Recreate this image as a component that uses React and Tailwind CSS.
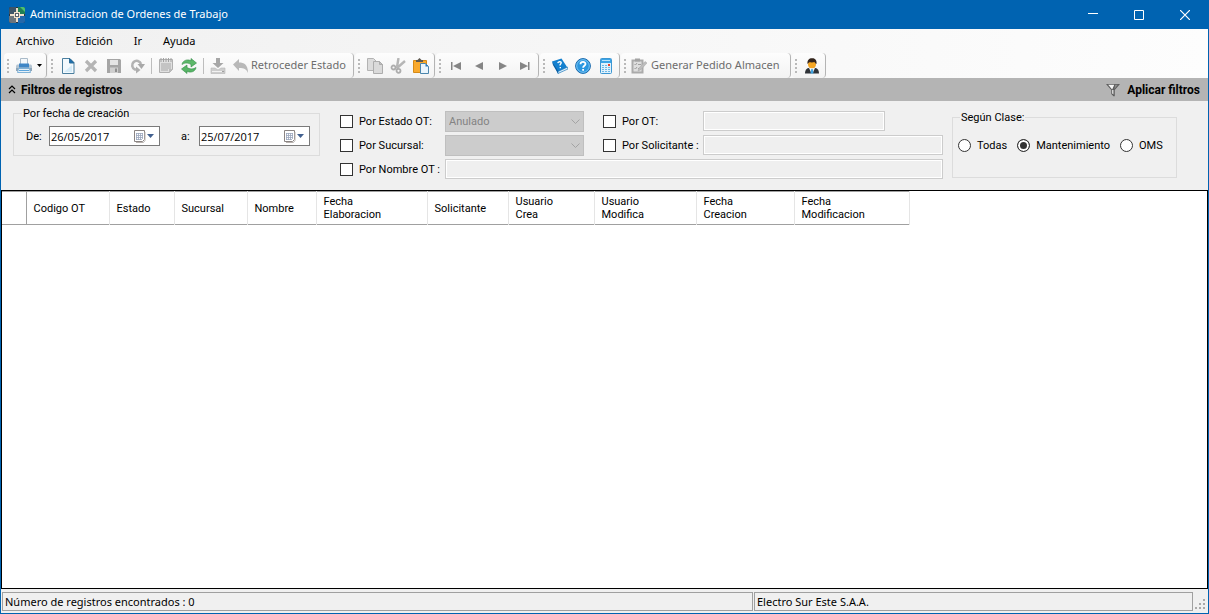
import React, { useState } from "react";

const menus = ["Archivo", "Edición", "Ir", "Ayuda"];

const columns = [
  { label: "", width: 24 },
  { label: "Codigo OT", width: 83 },
  { label: "Estado", width: 65 },
  { label: "Sucursal", width: 73 },
  { label: "Nombre", width: 69 },
  { label: "Fecha Elaboracion", width: 111 },
  { label: "Solicitante", width: 81 },
  { label: "Usuario Crea", width: 86 },
  { label: "Usuario Modifica", width: 102 },
  { label: "Fecha Creacion", width: 98 },
  { label: "Fecha Modificacion", width: 115 },
];

const Icon = ({ children, size = 16 }) => (
  <svg width={size} height={size} viewBox="0 0 16 16" fill="none" className="shrink-0">
    {children}
  </svg>
);

const AppIcon = () => (
  <Icon>
    <rect width="16" height="16" rx="2" fill="#2a3440" />
    <path d="M2 0h5v7H0V2a2 2 0 0 1 2-2z" fill="#3d5468" />
    <path d="M9 0h5a2 2 0 0 1 2 2v5H9z" fill="#1f7f55" />
    <path d="M11 0h3a2 2 0 0 1 2 2v3z" fill="#4fc06d" />
    <path d="M0 9h7v7H2a2 2 0 0 1-2-2z" fill="#6b747c" />
    <path d="M9 9h7v5a2 2 0 0 1-2 2H9z" fill="#2468ab" />
    <path d="M7 1h2v4h2v2h4v2h-4v2H9v4H7v-4H5V9H1V7h4V5h2z" fill="#efe0cc" />
    <path d="M6 6h4v4H6z" fill="#59616b" />
    <path d="M7 7h2v2H7z" fill="#fff" />
  </Icon>
);

const PrintIcon = () => (
  <Icon>
    <path d="M4.500.5h7V7h-7z" fill="#f4f8fb" stroke="#a9bac8" />
    <path d="M1 6.500h14l1 1V13H0V7.500z" fill="#b5c5d2" />
    <path d="M3 5.500h10v4H3z" fill="#3f86c6" />
    <path d="M0 10h16v3H0z" fill="#8ea5b8" />
    <path d="M2.500 10.500h11l1 4h-13z" fill="#e9f1f7" stroke="#7fb1d6" />
    <path d="M3 12.500h10" stroke="#5ca5dc" />
  </Icon>
);

const NewIcon = () => (
  <Icon>
    <path d="M2.500.5h7.500l4 4v11H2.500z" fill="#f2f9fd" stroke="#4b7f9f" />
    <path d="M9.500.5v4.500h4.500z" fill="#1c6fb0" stroke="#2d6e99" />
    <path d="M4 14l8-7v7z" fill="#d4ebf8" />
  </Icon>
);

const DeleteIcon = () => (
  <Icon>
    <path d="M3 3l10 10M13 3L3 13" stroke="#b4b4b4" strokeWidth="3.200" />
  </Icon>
);

const SaveIcon = () => (
  <Icon>
    <path d="M1 1h13l1 1v13H1z" fill="#a5a5a5" />
    <path d="M4 2h8v5H4z" fill="#e4e4e4" />
    <path d="M4 9.500h8V15H4z" fill="#cfcfcf" />
    <path d="M9 10.500h2V14H9z" fill="#8f8f8f" />
  </Icon>
);

const UndoIcon = () => (
  <Icon>
    <path d="M8 11.500H6A4.500 4.500 0 1 1 12 6" stroke="#b2b2b2" strokeWidth="2.600" />
    <path d="M8.500 6H16l-3.500 5z" fill="#a8a8a8" />
    <path d="M7 8.500v7l4.500-3.500z" fill="#aeaeae" />
  </Icon>
);

const SheetIcon = () => (
  <Icon>
    <path d="M1.500 1.500h13v10l-3 3h-10z" fill="#e0e0e0" stroke="#b0b0b0" />
    <path d="M3 0v4M5.500 0v4M8 0v4M10.500 0v4M13 0v4" stroke="#a2a2a2" />
    <path d="M3 6h10M3 8h10M3 10h10M3 12h7" stroke="#a8a8a8" />
    <path d="M11 15v-4h4z" fill="#bcbcbc" />
  </Icon>
);

const RefreshIcon = () => (
  <Icon>
    <path d="M1 6.500C1.500 3 5 1.500 8 2l2 .8V.5L15.500 5 10 9V6.500C7.500 4.800 4 4.500 1 6.500z" fill="#5cb869" stroke="#2f8a43" strokeWidth=".6" />
    <path d="M15 9.500c-.5 3.500-4 5-7 4.500l-2-.8v2.300L.5 11 6 7v2.500c2.500 1.700 6 2 9 0z" fill="#57b566" stroke="#2f8a43" strokeWidth=".6" />
  </Icon>
);

const ImportIcon = () => (
  <Icon>
    <path d="M6 0h4v5h3.500L8 10 2.500 5H6z" fill="#a6a6a6" />
    <path d="M1 10h4l3 2 3-2h4v5.500H1z" fill="#cdcdcd" stroke="#b6b6b6" strokeWidth=".6" />
    <path d="M2 13.500h12" stroke="#f2f2f2" />
    <path d="M12 13h2v1h-2z" fill="#a0a0a0" />
  </Icon>
);

const BackIcon = () => (
  <Icon>
    <path d="M0 6.500L6 1v3.500c5 0 9 2 9 10.500-1.500-4-4-5-9-5V13z" fill="#b8b8b8" />
  </Icon>
);

const CopyIcon = () => (
  <Icon>
    <path d="M.5.5h6l3 3v9h-9z" fill="#dcdcdc" stroke="#b3b3b3" />
    <path d="M6.500 3.500h6l3 3v9h-9z" fill="#dadada" stroke="#adadad" />
    <path d="M12.500 3.500v3h3z" fill="#c0c0c0" stroke="#adadad" />
  </Icon>
);

const CutIcon = () => (
  <Icon>
    <path d="M8.500 0L7 9M15 3L6.500 10.500" stroke="#b6b6b6" strokeWidth="2.400" />
    <circle cx="3.500" cy="9.500" r="2" stroke="#adadad" strokeWidth="1.800" />
    <circle cx="8.500" cy="12.800" r="2" stroke="#adadad" strokeWidth="1.800" />
  </Icon>
);

const PasteIcon = () => (
  <Icon>
    <path d="M.5 2.500h13v12H.5z" fill="#f9a92c" stroke="#d58a17" />
    <path d="M3 2h1.500L6.500 0 8.500 2H10v2H3z" fill="#5f5a50" />
    <path d="M7.500 5.500h5l3 3v7h-8z" fill="#eaf5fc" stroke="#4b86ad" />
    <path d="M12.500 5.500v3h3z" fill="#2a7ab8" />
  </Icon>
);

const FirstIcon = () => (
  <Icon>
    <path d="M3 4h1.500v8H3zM13 4v8L5 8z" fill="#858585" />
  </Icon>
);
const PrevIcon = () => (
  <Icon>
    <path d="M12 4v8L4 8z" fill="#858585" />
  </Icon>
);
const NextIcon = () => (
  <Icon>
    <path d="M5 4v8l8-4z" fill="#858585" />
  </Icon>
);
const LastIcon = () => (
  <Icon>
    <path d="M3 4v8l8-4zM11 4h1.500v8H11z" fill="#858585" />
  </Icon>
);

const BookIcon = () => (
  <Icon>
    <path d="M0 3.500L9.500.5 16 10.500 6 15.500z" fill="#1380cf" />
    <path d="M0 3.500L1 7l5 8.500.5-2z" fill="#0b5c9f" />
    <path d="M6 13.500l9.500-4.500.5 2L6 15.500z" fill="#d9eefb" stroke="#1471b5" strokeWidth=".6" />
    <path d="M5.800 5.200C6 3.500 9 3 9.200 4.800c0 1.200-1.400 1.200-1.200 2.700M8.300 9v1.300" stroke="#fff" strokeWidth="1.400" />
  </Icon>
);

const HelpIcon = () => (
  <Icon>
    <circle cx="8" cy="8" r="7.400" fill="#2b97e0" stroke="#1a69ac" />
    <circle cx="8" cy="8" r="6.300" stroke="#8fd0f7" strokeWidth=".8" />
    <path d="M5.500 6.200C5.600 3.200 10.500 3.300 10.500 6c0 1.800-2.400 1.800-2.400 3.700M8.100 11v1.800" stroke="#fff" strokeWidth="1.800" />
  </Icon>
);

const CalcIcon = () => (
  <Icon>
    <rect x="2.500" y=".5" width="11" height="15" rx="1" fill="#dff1fc" stroke="#3c97d3" />
    <path d="M3 1h10v4H3z" fill="#3ba4e6" />
    <path d="M4 2.500h8" stroke="#b9e2fa" />
    <path d="M4 7.500h8M4 9.500h8M4 11.500h8M4 13.500h8" stroke="#6bb8e8" strokeDasharray="2 1" />
    <path d="M10 6h2v2h-2z" fill="#e8402c" />
  </Icon>
);

const OrderIcon = () => (
  <Icon>
    <path d="M1.500 2.500h10v12h-10z" fill="#dedede" stroke="#ababab" strokeWidth="2" />
    <path d="M4 .5h5v3H4z" fill="#a3a3a3" />
    <path d="M3.500 6l1 1 1.500-2M7 6.500h3M3.500 10l1 1 1.500-2M7 10.500h2" stroke="#a0a0a0" />
    <path d="M7 13l1-3 6-6.500L16 5l-6 6.500z" fill="#bdbdbd" stroke="#a5a5a5" strokeWidth=".5" />
  </Icon>
);

const UserIcon = () => (
  <Icon>
    <path d="M1 15.500c0-4 2-6 7-6s7 2 7 6z" fill="#2f3338" />
    <path d="M5 10h6l-2.500 5.500h-1z" fill="#eef6fb" />
    <path d="M7.300 11h1.400l.8 4.500h-3z" fill="#3fa2e0" />
    <circle cx="8" cy="6.200" r="4" fill="#f5a623" />
    <path d="M3.500 6C3 2 5.500 0 8.500.3 11.500.3 13 3 12.500 6 11 5.500 10.500 4 10.500 4 8 5 5.500 4 5 4.500c-.5.500-1 1-1.500 1.500z" fill="#33251c" />
  </Icon>
);

const FilterIcon = () => (
  <Icon size={14}>
    <path d="M0 1h16l-6 7v7H8.500L6 12.500V8z" fill="#5c5c5c" />
    <path d="M2.500 2h7L7 7.500z" fill="#f4f4f4" />
    <path d="M7 8h1.500v5L7 12z" fill="#e6e6e6" />
    <path d="M10.500 2h3L9.500 7z" fill="#8c8c8c" />
  </Icon>
);

const CalendarIcon = () => (
  <svg width="21" height="13" viewBox="0 0 21 13" fill="none">
    <path d="M.5.5h10v9l-2 2h-8z" fill="#fff" stroke="#8a8482" />
    <path d="M11 2v8.500L9.500 12.500H2" stroke="#b9b3b0" />
    <path d="M2 3.500h7M2 5.500h7M2 7.500h7M2 9.500h6M2.500 3v7M4.500 3v7M6.500 3v7M8.500 3v6" stroke="#9aa6bc" strokeWidth=".8" />
    <path d="M13 4h7l-3.500 4z" fill="#42608f" />
  </svg>
);

const Strip = ({ children }) => (
  <div className="flex items-center h-[25px] pr-0.5 rounded-sm border-r border-[#b4b4b4] bg-linear-to-b from-[#fdfdfd] to-[#f3f3f3]">
    <div className="w-2 shrink-0 flex justify-center">
      <svg width="2" height="14" viewBox="0 0 2 14">
        <path d="M0 0h2v2H0zM0 4h2v2H0zM0 8h2v2H0zM0 12h2v2H0z" fill="#b9b9b9" />
      </svg>
    </div>
    {children}
  </div>
);

const ToolButton = ({ label, children }) => (
  <button type="button" aria-label={label} className="w-[23px] h-[23px] shrink-0 flex items-center justify-center">
    {children}
  </button>
);

const Separator = () => (
  <div className="w-1.5 flex justify-center">
    <div className="w-px h-4 bg-[#bdbdbd]" />
  </div>
);

const CheckField = ({ id, label }) => (
  <div className="flex items-center gap-1.5 whitespace-nowrap">
    <input
      id={id}
      type="checkbox"
      className="appearance-none size-[13px] shrink-0 border border-[#333] bg-white checked:bg-[#333] checked:shadow-[inset_0_0_0_2px_white]"
    />
    <label htmlFor={id}>{label}</label>
  </div>
);

const SelectField = ({ label, value }) => (
  <div className="relative h-[21px]">
    <select
      disabled
      aria-label={label}
      className="appearance-none w-full h-full pl-[3px] border border-[#bfbfbf] bg-[#cccccc] text-[#838383] opacity-100"
    >
      <option>{value}</option>
    </select>
    <svg width="9" height="6" viewBox="0 0 9 6" fill="none" className="absolute right-1 top-2 pointer-events-none">
      <path d="M.5.5l4 4 4-4" stroke="#a3a3a3" />
    </svg>
  </div>
);

const DateField = ({ id, label, labelClass, value, onChange }) => (
  <div className="flex items-center">
    <label htmlFor={id} className={labelClass}>
      {label}
    </label>
    <div className="flex items-center w-[111px] h-5 pr-1 border border-[#7a7a7a] bg-white">
      <input
        id={id}
        type="text"
        value={value}
        onChange={(e) => onChange(e.target.value)}
        className="flex-1 min-w-0 pl-px font-['Open_Sans',sans-serif] text-[11px] outline-none"
      />
      <button type="button" aria-label="Abrir calendario">
        <CalendarIcon />
      </button>
    </div>
  </div>
);

const disabledInput = "h-5 border border-[#cccccc] bg-[#efefef] shadow-[inset_0_0_0_1px_white]";

export default function App() {
  const [from, setFrom] = useState("26/05/2017");
  const [to, setTo] = useState("25/07/2017");
  const [clase, setClase] = useState("Mantenimiento");

  return (
    <div className="min-h-screen flex flex-col border border-t-0 border-[#0063b1] bg-[#f0f0f0] text-black font-['Noto_Sans','Open_Sans',sans-serif] text-[11px]">
      <header className="flex items-center h-[29px] pl-2 bg-[#0063b1] text-white">
        <AppIcon />
        <h1 className="pl-[5px] flex-1">Administracion de Ordenes de Trabajo</h1>
        <button type="button" aria-label="Minimizar" className="w-[46px] h-full flex items-center justify-center">
          <svg width="10" height="10" viewBox="0 0 10 10" stroke="#fff">
            <path d="M0 3.500h10" />
          </svg>
        </button>
        <button type="button" aria-label="Maximizar" className="w-[46px] h-full flex items-center justify-center">
          <svg width="10" height="10" viewBox="0 0 10 10" fill="none" stroke="#fff">
            <path d="M.5.5h9v9h-9z" />
          </svg>
        </button>
        <button type="button" aria-label="Cerrar" className="w-[46px] h-full flex items-center justify-center">
          <svg width="10" height="10" viewBox="0 0 10 10" stroke="#fff" strokeWidth="1.200">
            <path d="M0 0l10 10M10 0L0 10" />
          </svg>
        </button>
      </header>

      <div className="bg-linear-to-r from-[#f0f0f0] to-[#fdfdfd]">
        <nav className="flex items-center gap-[21px] h-6 pl-[15px]">
          {menus.map((m) => (
            <button key={m} type="button">
              {m}
            </button>
          ))}
        </nav>
        <div className="flex items-center gap-px pl-[3px] text-[#6d6d6d] overflow-hidden">
          <Strip>
            <ToolButton label="Imprimir"><PrintIcon /></ToolButton>
            <button type="button" aria-label="Opciones de impresión" className="w-[9px] flex justify-center">
              <svg width="5" height="3" viewBox="0 0 5 3">
                <path d="M0 0h5L2.500 3z" fill="#000" />
              </svg>
            </button>
          </Strip>
          <Strip>
            <ToolButton label="Nuevo"><NewIcon /></ToolButton>
            <ToolButton label="Eliminar"><DeleteIcon /></ToolButton>
            <ToolButton label="Guardar"><SaveIcon /></ToolButton>
            <ToolButton label="Deshacer"><UndoIcon /></ToolButton>
            <Separator />
            <ToolButton label="Detalle"><SheetIcon /></ToolButton>
            <ToolButton label="Actualizar"><RefreshIcon /></ToolButton>
            <Separator />
            <ToolButton label="Importar"><ImportIcon /></ToolButton>
            <button type="button" className="flex items-center gap-0.5 w-[122px] pl-1 whitespace-nowrap">
              <BackIcon />
              Retroceder Estado
            </button>
          </Strip>
          <Strip>
            <ToolButton label="Copiar"><CopyIcon /></ToolButton>
            <ToolButton label="Cortar"><CutIcon /></ToolButton>
            <ToolButton label="Pegar"><PasteIcon /></ToolButton>
          </Strip>
          <Strip>
            <ToolButton label="Primero"><FirstIcon /></ToolButton>
            <ToolButton label="Anterior"><PrevIcon /></ToolButton>
            <ToolButton label="Siguiente"><NextIcon /></ToolButton>
            <ToolButton label="Último"><LastIcon /></ToolButton>
          </Strip>
          <Strip>
            <ToolButton label="Manual"><BookIcon /></ToolButton>
            <ToolButton label="Ayuda"><HelpIcon /></ToolButton>
            <ToolButton label="Calculadora"><CalcIcon /></ToolButton>
          </Strip>
          <Strip>
            <button type="button" className="flex items-center gap-1 w-[159px] pl-0.5 whitespace-nowrap">
              <OrderIcon />
              Generar Pedido Almacen
            </button>
          </Strip>
          <Strip>
            <ToolButton label="Usuario"><UserIcon /></ToolButton>
          </Strip>
        </div>
      </div>

      <section className="font-['Roboto','Liberation_Sans',sans-serif] leading-[13px]">
        <div className="flex items-center justify-between h-[23px] pl-[7px] pr-2 bg-[#b4b4b4] font-bold text-xs">
          <button type="button" className="flex items-center gap-[5px]">
            <svg width="8" height="9" viewBox="0 0 8 9" fill="none" stroke="#000" strokeWidth="1.200">
              <path d="M1 4l3-3 3 3M1 8l3-3 3 3" />
            </svg>
            Filtros de registros
          </button>
          <button type="button" className="flex items-center gap-[7px]">
            <FilterIcon />
            Aplicar filtros
          </button>
        </div>

        <div className="flex items-start h-[89px] pl-3 pt-1.5">
          <fieldset className="w-[307px] h-[49px] shrink-0 border border-[#dcdcdc]">
            <legend className="ml-2 px-px">Por fecha de creación</legend>
            <div className="flex pt-1.5 pl-3 gap-[21px]">
              <DateField id="desde" label="De:" labelClass="w-[23px]" value={from} onChange={setFrom} />
              <DateField id="hasta" label="a:" labelClass="w-[18px]" value={to} onChange={setTo} />
            </div>
          </fieldset>

          <div className="grid grid-cols-[105px_139px_19px_100px_240px] auto-rows-[24px] items-center ml-5 mt-0.5 shrink-0">
            <CheckField id="estado" label="Por Estado OT:" />
            <SelectField label="Estado OT" value="Anulado" />
            <span />
            <CheckField id="ot" label="Por OT:" />
            <input disabled aria-label="OT" className={`${disabledInput} w-[182px]`} />

            <CheckField id="sucursal" label="Por Sucursal:" />
            <SelectField label="Sucursal" value="" />
            <span />
            <CheckField id="solicitante" label="Por Solicitante :" />
            <input disabled aria-label="Solicitante" className={disabledInput} />

            <CheckField id="nombre" label="Por Nombre OT :" />
            <input disabled aria-label="Nombre OT" className={`${disabledInput} col-span-4`} />
          </div>

          <fieldset className="w-[225px] h-[67px] shrink-0 ml-[9px] mt-1 border border-[#dcdcdc]">
            <legend className="ml-[7px] px-px">Según Clase:</legend>
            <div className="flex gap-2.5 pt-[15px] pl-[5px]">
              {["Todas", "Mantenimiento", "OMS"].map((c) => (
                <label key={c} className="flex items-center gap-1.5">
                  <input
                    type="radio"
                    name="clase"
                    checked={clase === c}
                    onChange={() => setClase(c)}
                    className="appearance-none size-[13px] shrink-0 rounded-full border border-[#333] bg-white checked:bg-[#333] checked:shadow-[inset_0_0_0_2px_white]"
                  />
                  {c}
                </label>
              ))}
            </div>
          </fieldset>
        </div>
      </section>

      <main className="flex-1 border border-black bg-white overflow-x-auto">
        <table className="table-fixed w-[907px] border-collapse font-['Roboto','Liberation_Sans',sans-serif] leading-[13px]">
          <thead>
            <tr className="h-[33px] border-y border-[#a0a0a0]">
              {columns.map((col, i) => (
                <th
                  key={i}
                  style={{ width: col.width }}
                  className="pl-[7px] pr-5 text-left font-normal border-r border-[#e5e5e5] first:border-[#a0a0a0] first:p-0"
                >
                  {col.label}
                </th>
              ))}
            </tr>
          </thead>
          <tbody />
        </table>
      </main>

      <footer className="flex items-center h-6 gap-px pl-px">
        <div className="flex-1 h-[19px] px-0.5 border border-[#a0a0a0] leading-[17px]">
          Número de registros encontrados : 0
        </div>
        <div className="w-[439px] h-[19px] px-0.5 border border-[#a0a0a0] leading-[17px]">Electro Sur Este S.A.A.</div>
        <svg width="14" height="12" viewBox="0 0 14 12" className="self-end mb-0.5">
          <path d="M9 0h2v2H9zM5 4h2v2H5zM9 4h2v2H9zM1 8h2v2H1zM5 8h2v2H5zM9 8h2v2H9z" fill="#a9a9a9" />
        </svg>
      </footer>
    </div>
  );
}
